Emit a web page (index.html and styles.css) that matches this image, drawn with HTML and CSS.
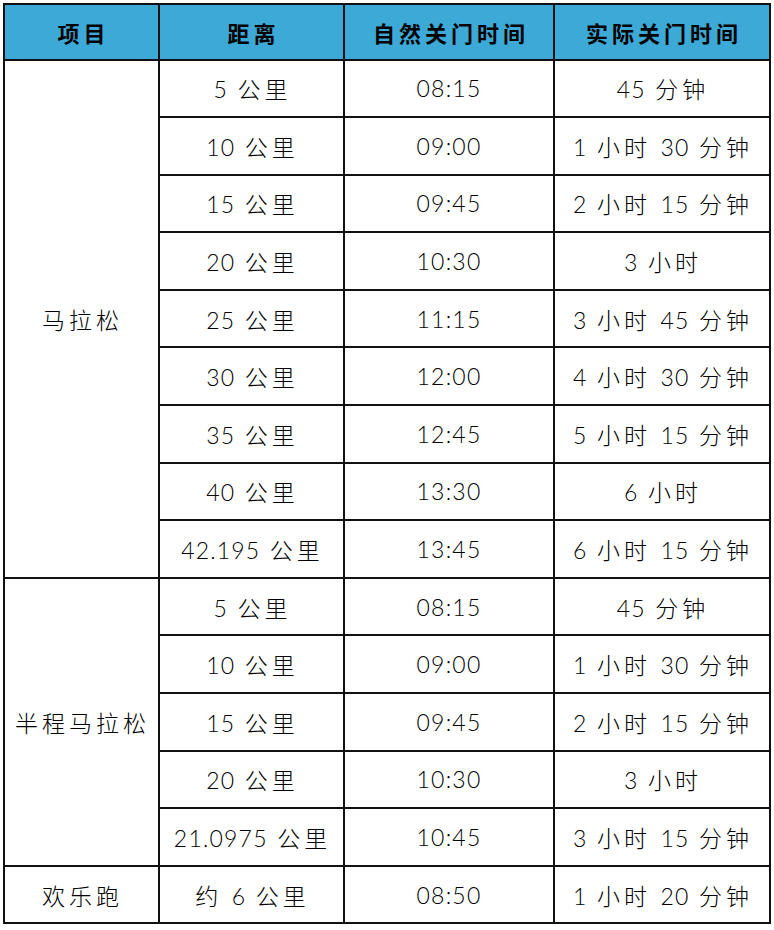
FILE: index.html
```html
<!DOCTYPE html>
<html lang="zh">
<head>
<meta charset="utf-8">
<link rel="stylesheet" href="styles.css">
</head>
<body>
<table class="cutoff">
  <colgroup>
    <col class="c1"><col class="c2"><col class="c3"><col class="c4">
  </colgroup>
  <thead>
    <tr><th>项目</th><th>距离</th><th>自然关门时间</th><th>实际关门时间</th></tr>
  </thead>
  <tbody>
    <tr><td rowspan="9"><span class="h">马拉松</span></td><td>5 <span class="h">公里</span></td><td>08:15</td><td>45 <span class="h">分钟</span></td></tr>
    <tr><td>10 <span class="h">公里</span></td><td>09:00</td><td>1 <span class="h">小时</span> 30 <span class="h">分钟</span></td></tr>
    <tr><td>15 <span class="h">公里</span></td><td>09:45</td><td>2 <span class="h">小时</span> 15 <span class="h">分钟</span></td></tr>
    <tr><td>20 <span class="h">公里</span></td><td>10:30</td><td>3 <span class="h">小时</span></td></tr>
    <tr><td>25 <span class="h">公里</span></td><td>11:15</td><td>3 <span class="h">小时</span> 45 <span class="h">分钟</span></td></tr>
    <tr><td>30 <span class="h">公里</span></td><td>12:00</td><td>4 <span class="h">小时</span> 30 <span class="h">分钟</span></td></tr>
    <tr><td>35 <span class="h">公里</span></td><td>12:45</td><td>5 <span class="h">小时</span> 15 <span class="h">分钟</span></td></tr>
    <tr><td>40 <span class="h">公里</span></td><td>13:30</td><td>6 <span class="h">小时</span></td></tr>
    <tr><td>42.195 <span class="h">公里</span></td><td>13:45</td><td>6 <span class="h">小时</span> 15 <span class="h">分钟</span></td></tr>
    <tr><td rowspan="5"><span class="h">半程马拉松</span></td><td>5 <span class="h">公里</span></td><td>08:15</td><td>45 <span class="h">分钟</span></td></tr>
    <tr><td>10 <span class="h">公里</span></td><td>09:00</td><td>1 <span class="h">小时</span> 30 <span class="h">分钟</span></td></tr>
    <tr><td>15 <span class="h">公里</span></td><td>09:45</td><td>2 <span class="h">小时</span> 15 <span class="h">分钟</span></td></tr>
    <tr><td>20 <span class="h">公里</span></td><td>10:30</td><td>3 <span class="h">小时</span></td></tr>
    <tr><td>21.0975 <span class="h">公里</span></td><td>10:45</td><td>3 <span class="h">小时</span> 15 <span class="h">分钟</span></td></tr>
    <tr><td><span class="h">欢乐跑</span></td><td><span class="h">约</span> 6 <span class="h">公里</span></td><td>08:50</td><td>1 <span class="h">小时</span> 20 <span class="h">分钟</span></td></tr>
  </tbody>
</table>
</body>
</html>
```

FILE: styles.css
```css
html, body {
  margin: 0;
  padding: 0;
  background: #ffffff;
}
body {
  padding: 3px 0 0 3px;
}
.cutoff {
  border-collapse: collapse;
  table-layout: fixed;
  width: 766px;
  font-family: Lato, "Liberation Sans", "Noto Sans CJK SC", sans-serif;
  color: #000000;
}
.c1 { width: 155px; }
.c2 { width: 185px; }
.c3 { width: 210px; }
.c4 { width: 216px; }
.cutoff th,
.cutoff td {
  border: 2px solid #111111;
  text-align: center;
  vertical-align: middle;
  padding: 0;
  white-space: nowrap;
}
.cutoff th {
  height: 53.5px;
  background: #3ca9d6;
  font-family: "Noto Sans CJK SC", sans-serif;
  font-weight: 700;
  font-size: 22px;
  letter-spacing: 4px;
  text-indent: 4px;
}
.cutoff td {
  height: 55.6px;
  font-size: 23px;
  font-weight: 300;
  letter-spacing: 1.2px;
  word-spacing: 2px;
}
.h {
  font-family: "Noto Sans CJK SC", sans-serif;
  font-weight: 300;
  letter-spacing: 4px;
}
.cutoff td > .h:last-child {
  margin-right: -2px;
}
```
